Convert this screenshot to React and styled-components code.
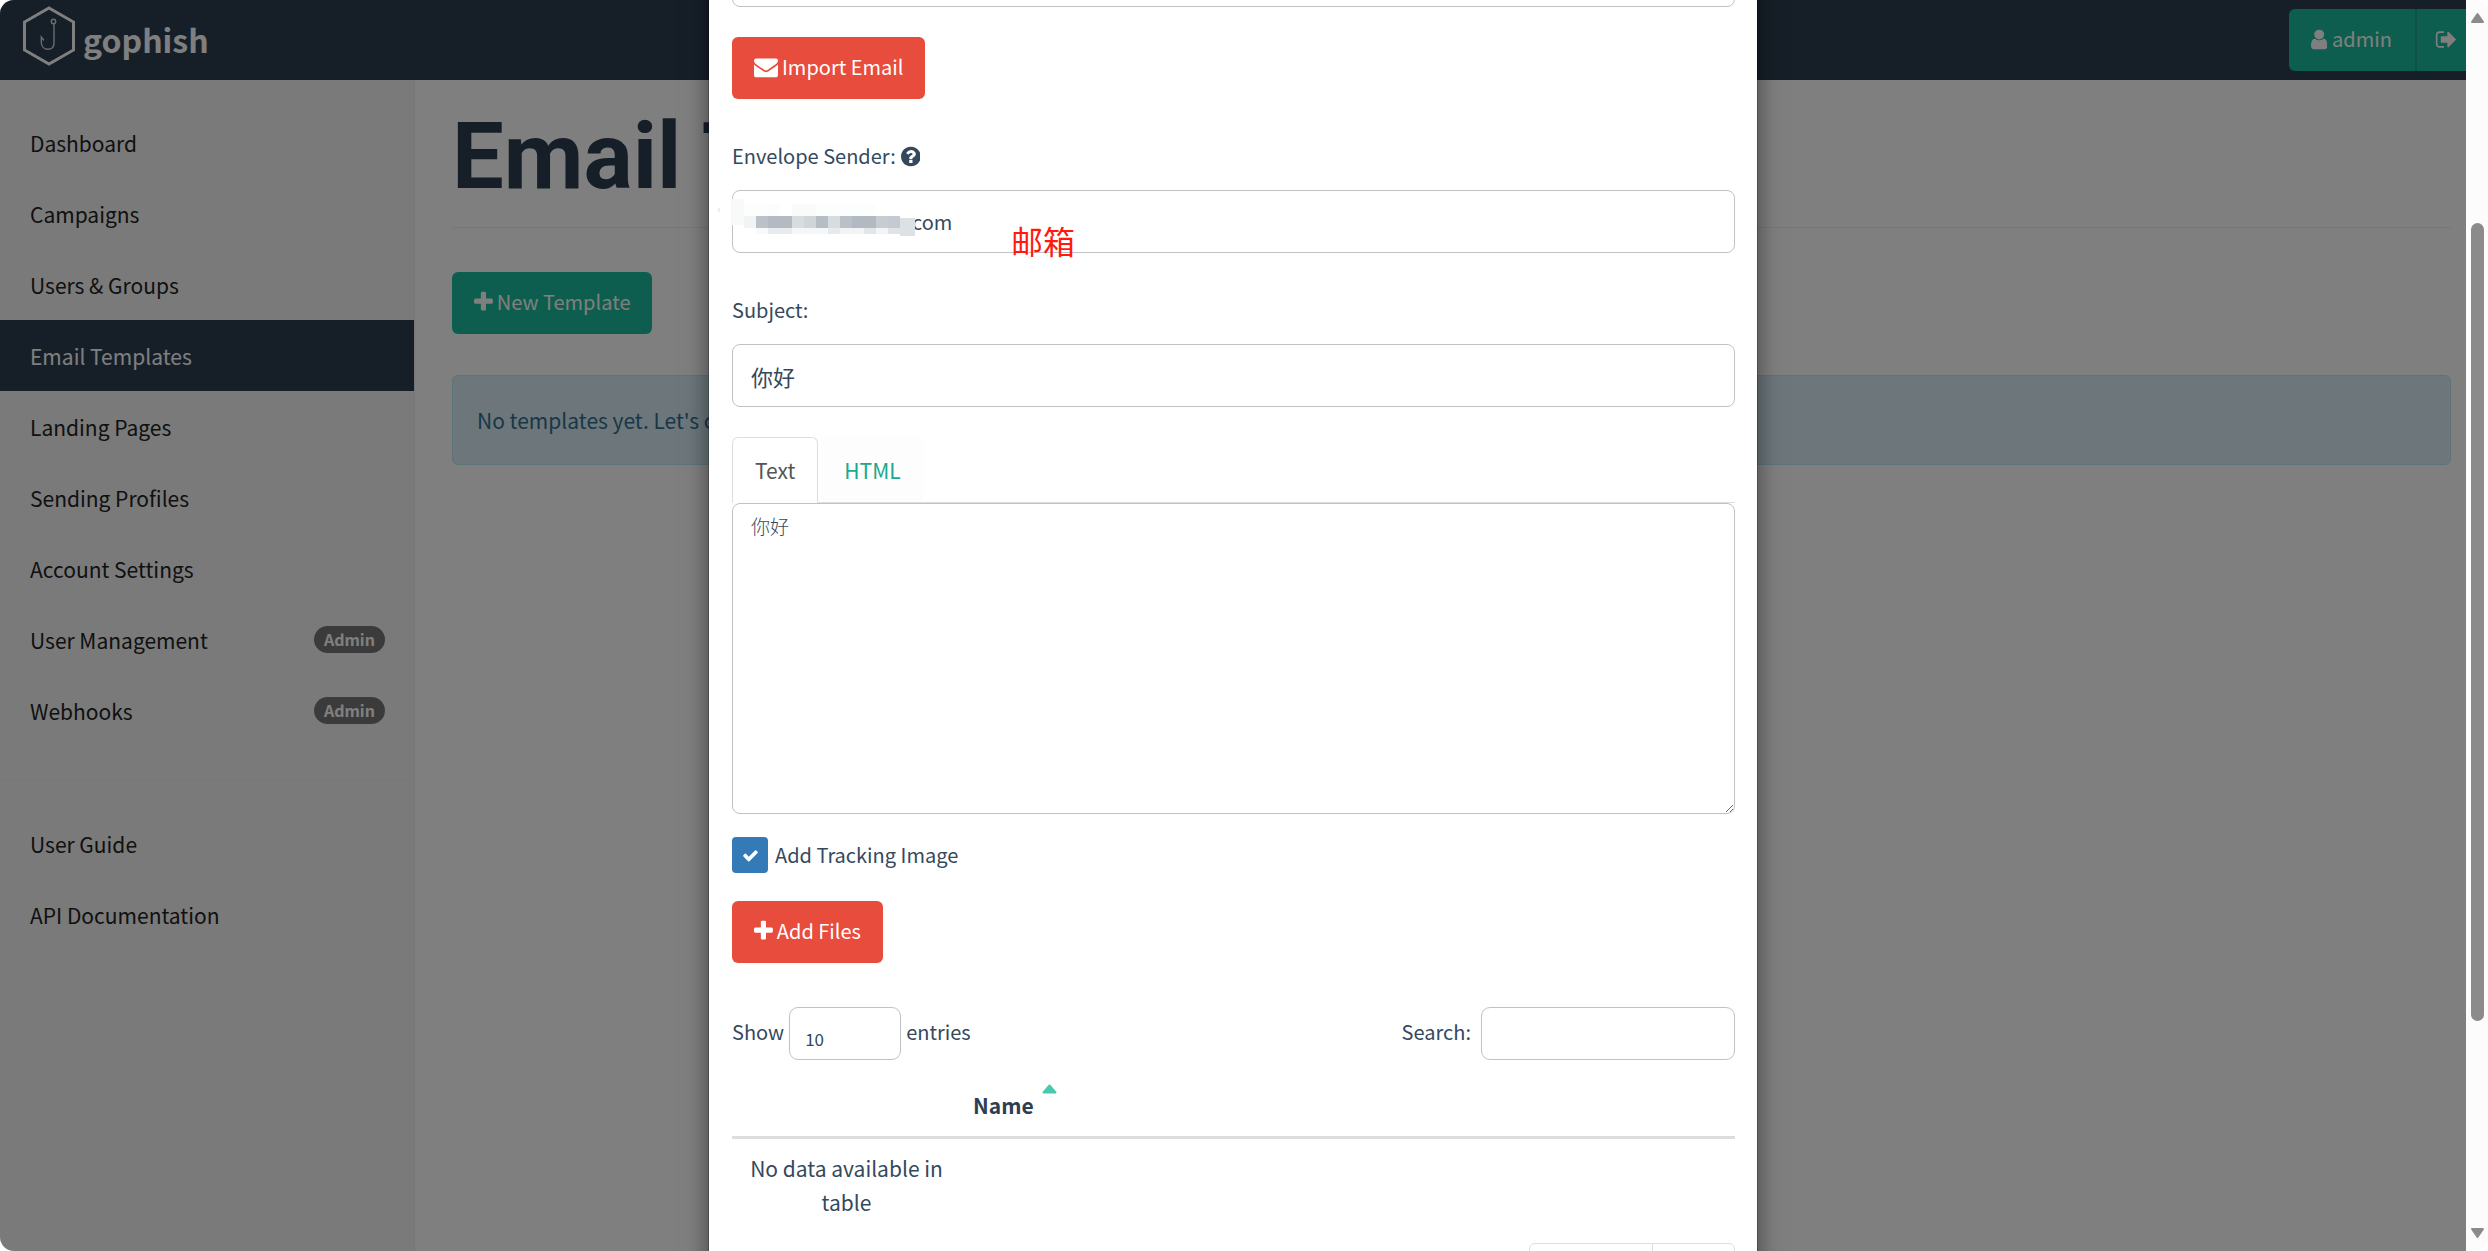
import styled, { createGlobalStyle } from "styled-components";

const ICONS = {
  plus: {
    box: "192 0 1408 1792",
    path: "M1600 736v192q0 40-28 68t-68 28h-416v416q0 40-28 68t-68 28h-192q-40 0-68-28t-28-68v-416h-416q-40 0-68-28t-28-68v-192q0-40 28-68t68-28h416v-416q0-40 28-68t68-28h192q40 0 68 28t28 68v416h416q40 0 68 28t28 68z",
  },
  user: {
    box: "256 0 1280 1792",
    path: "M1536 1399q0 109-62.5 187t-150.5 78h-854q-88 0-150.5-78t-62.5-187q0-85 8.5-160.5t31.5-152 58.5-131 94-89 134.5-34.5q131 128 313 128t313-128q76 0 134.5 34.5t94 89 58.5 131 31.5 152 8.5 160.5zm-256-887q0 159-112.5 271.5t-271.5 112.5-271.5-112.5-112.5-271.5 112.5-271.5 271.5-112.5 271.5 112.5 112.5 271.5z",
  },
  envelope: {
    box: "0 0 1792 1792",
    path: "M1792 710v794q0 66-47 113t-113 47h-1472q-66 0-113-47t-47-113v-794q44 49 101 87 362 246 497 345 57 42 92.5 65.5t94.5 48 110 24.5h2q51 0 110-24.5t94.5-48 92.5-65.5q170-123 498-345 57-39 100-87zm0-294q0 79-49 151t-122 123q-376 261-468 325-10 7-42.5 31t-54 38.5-52 32.5-57.5 27-50 9h-2q-23 0-50-9t-57.5-27-52-32.5-54-38.5-42.5-31q-91-64-262-182.5t-205-142.5q-62-42-117-115.5t-55-136.5q0-78 41.5-130t118.5-52h1472q65 0 112.5 47t47.5 113z",
  },
  question: {
    box: "128 0 1536 1792",
    path: "M1024 1376v-192q0-14-9-23t-23-9h-192q-14 0-23 9t-9 23v192q0 14 9 23t23 9h192q14 0 23-9t9-23zm256-672q0-88-55.5-163t-138.5-116-170-41q-243 0-371 213-15 24 8 42l132 100q7 6 19 6 16 0 25-12 53-68 86-92 34-24 86-24 48 0 85.5 26t37.5 59q0 38-20 61t-68 45q-63 28-115.5 86.5t-52.5 125.5v36q0 14 9 23t23 9h192q14 0 23-9t9-23q0-19 21.5-49.5t54.5-49.5q32-18 49-28.5t46-35 44.5-48 28-60.5 12.5-81zm384 192q0 209-103 385.5t-279.5 279.5-385.5 103-385.5-103-279.5-279.5-103-385.5 103-385.5 279.5-279.5 385.5-103 385.5 103 279.5 279.5 103 385.5z",
  },
  check: {
    box: "0 0 1792 1792",
    path: "M1671 566q0 40-28 68l-724 724-136 136q-28 28-68 28t-68-28l-136-136-362-362q-28-28-28-68t28-68l136-136q28-28 68-28t68 28l294 295 656-657q28-28 68-28t68 28l136 136q28 28 28 68z",
  },
  signOut: {
    box: "0 0 1792 1792",
    path: "M704 1440q0 4 1 20t.5 26.5-3 23.5-10 19.5-20.5 6.5h-320q-119 0-203.5-84.5t-84.5-203.5v-704q0-119 84.5-203.5t203.5-84.5h320q13 0 22.5 9.5t9.5 22.5q0 4 1 20t.5 26.5-3 23.5-10 19.5-20.5 6.5h-320q-66 0-113 47t-47 113v704q0 66 47 113t113 47h312l11.5 1 11.5 3 8 5.5 7 9 2 13.5zm928-544q0 26-19 45l-544 544q-19 19-45 19t-45-19-19-45v-288h-448q-26 0-45-19t-19-45v-384q0-26 19-45t45-19h448v-288q0-26 19-45t45-19 45 19l544 544q19 19 19 45z",
  },
};

const GlobalStyle = createGlobalStyle`
  *, *::before, *::after {
    box-sizing: border-box;
  }

  body {
    margin: 0;
    overflow: hidden;
    background: #ffffff;
    color: #34495e;
    font-family: "Noto Sans CJK SC", sans-serif;
    font-size: 21px;
    line-height: 32px;
  }

  button, input, select {
    font: inherit;
    color: inherit;
  }
`;

const Window = styled.div`
  display: flex;
  height: 100vh;
  border-radius: 14px;
  overflow: hidden;
`;

const Viewport = styled.div`
  position: relative;
  flex: 1;
  min-width: 0;
  overflow: hidden;
`;

const Navbar = styled.header`
  display: flex;
  align-items: center;
  justify-content: space-between;
  height: 80px;
  padding-left: 23px;
  background: #2c3e50;
`;

const Brand = styled.a`
  display: flex;
  align-items: center;
  gap: 7px;
  height: 72px;
  align-self: flex-start;
  color: #ffffff;
  text-decoration: none;
`;

const BrandName = styled.span`
  padding-top: 6px;
  font-size: 32px;
  font-weight: 700;
`;

const NavButtons = styled.div`
  display: flex;
`;

const NavButton = styled.button`
  display: flex;
  align-items: center;
  gap: 5px;
  height: 62px;
  padding: ${(p) => (p.$end ? "0 8px 2px 18px" : "0 23px 2px 22px")};
  border: 0;
  border-left: ${(p) => (p.$end ? "2px solid #18a689" : "0")};
  border-radius: ${(p) => (p.$end ? "0" : "6px 0 0 6px")};
  background: #1abc9c;
  color: #ffffff;
  font-size: 20px;
`;

const Columns = styled.div`
  display: flex;
  height: calc(100vh - 80px);
`;

const Sidebar = styled.nav`
  flex: 0 0 415px;
  padding-top: 27px;
  border-right: 1px solid #eeeeee;
  background: #f5f5f5;
`;

const NavList = styled.ul`
  margin: 0;
  padding: 0 0 33px;
  list-style: none;

  & + & {
    padding-top: 28px;
    border-top: 1px solid #eeeeee;
  }
`;

const NavLink = styled.a`
  display: flex;
  align-items: center;
  justify-content: space-between;
  height: 71px;
  padding: 0 29px 0 30px;
  background: ${(p) => (p.$active ? "#2c3e50" : "transparent")};
  color: ${(p) => (p.$active ? "#ffffff" : "#222222")};
  text-decoration: none;
`;

const Badge = styled.span`
  padding: 0 10px;
  border-radius: 14px;
  background: #777777;
  color: #ffffff;
  font-size: 16px;
  font-weight: 700;
  line-height: 27px;
`;

const Main = styled.main`
  flex: 1;
  min-width: 0;
  padding: 26px 15px 0 37px;
`;

const PageTitle = styled.h1`
  margin: 0 0 44px;
  padding-bottom: 20px;
  border-bottom: 1px solid #eeeeee;
  color: #2c3e50;
  font-family: Roboto, sans-serif;
  font-size: 92px;
  font-weight: 700;
  line-height: 101px;
`;

const Button = styled.button`
  display: flex;
  align-items: center;
  gap: 4px;
  width: fit-content;
  height: 62px;
  padding: 0 22px 2px;
  border: 0;
  border-radius: 6px;
  background: ${(p) => (p.$danger ? "#e74c3c" : "#1abc9c")};
  color: #ffffff;
  font-size: 20px;
`;

const Alert = styled.div`
  margin-top: 41px;
  padding: 28px 24px;
  border: 1px solid #bce8f1;
  border-radius: 6px;
  background: #d9edf7;
  color: #31708f;
`;

const Overlay = styled.div`
  position: absolute;
  inset: 0;
  overflow: hidden;
  background: rgba(0, 0, 0, 0.5);
`;

const Modal = styled.section`
  display: flex;
  flex-direction: column;
  width: 1048px;
  max-width: 100%;
  margin: -56px auto 0;
  padding: 0 22px 0 23px;
  background: #ffffff;
  box-shadow: 0 0 0 1px rgba(0, 0, 0, 0.2), 0 8px 23px rgba(0, 0, 0, 0.5);
`;

const TextInput = styled.input`
  width: 100%;
  height: 63px;
  padding: 0 18px;
  border: 1px solid #bdc3c7;
  border-radius: 8px;
  background: #ffffff;
  color: #34495e;
`;

const ImportRow = styled.div`
  margin: 30px 0 41px;
`;

const Field = styled.div`
  position: relative;
  display: flex;
  flex-direction: column;
  gap: 18px;
  margin-bottom: 41px;
`;

const FieldLabel = styled.label`
  display: flex;
  align-items: center;
  gap: 5px;
  font-size: 20px;
`;

const SenderInput = styled(TextInput)`
  padding-left: 179px;
  font-size: 20px;
`;

const SubjectInput = styled(TextInput)`
  font-size: 22px;
`;

const Redaction = styled.svg`
  position: absolute;
  left: -18px;
  top: 44px;
`;

const Annotation = styled.span`
  position: absolute;
  left: 279px;
  bottom: -6px;
  color: #ff1a0e;
  font-size: 32px;
  line-height: 38px;
`;

const Tabs = styled.div`
  display: flex;
  gap: 3px;
  margin-top: -11px;
  border-bottom: 1px solid #dddddd;
`;

const Tab = styled.button`
  height: 66px;
  margin-bottom: -1px;
  padding: 0 22px;
  border: 1px solid ${(p) => (p.$active ? "#dddddd" : "transparent")};
  border-bottom-color: ${(p) => (p.$active ? "#ffffff" : "#dddddd")};
  border-radius: 6px 6px 0 0;
  background: ${(p) => (p.$active ? "#ffffff" : "#fdfdfd")};
  color: ${(p) => (p.$active ? "#555555" : "#1aa98c")};
`;

const Body = styled.textarea`
  display: block;
  width: 100%;
  height: 311px;
  padding: 6px 18px;
  border: 1px solid #bdc3c7;
  border-radius: 8px;
  color: #34495e;
  font-family: "Noto Sans CJK SC", sans-serif;
  font-size: 19px;
  font-weight: 300;
  line-height: 32px;
  resize: vertical;
`;

const CheckLabel = styled.label`
  display: flex;
  align-items: center;
  gap: 7px;
  margin: 23px 0 28px;
  font-size: 20px;
`;

const CheckBox = styled.span`
  position: relative;
  display: grid;
  place-items: center;
  width: 36px;
  height: 36px;
  border-radius: 4px;
  background: #337ab7;
  color: #ffffff;
`;

const HiddenCheck = styled.input`
  position: absolute;
  inset: 0;
  margin: 0;
  opacity: 0;
`;

const TableTools = styled.div`
  display: flex;
  justify-content: space-between;
  margin-top: 44px;
`;

const ToolLabel = styled.label`
  display: flex;
  align-items: flex-start;
  gap: ${(p) => p.$gap};
  font-size: 20px;
  line-height: 49px;
`;

const LengthSelect = styled.select`
  width: 112px;
  height: 53px;
  padding: 11px 15px 0;
  border: 1px solid #bdc3c7;
  border-radius: 9px;
  background: #ffffff;
  color: #34495e;
  font-size: 17px;
  line-height: 32px;
  appearance: none;
`;

const SearchInput = styled(TextInput)`
  width: 254px;
  height: 53px;
  border-radius: 9px;
`;

const Table = styled.table`
  width: 100%;
  margin-top: 12px;
  border-collapse: collapse;
  table-layout: fixed;
`;

const HeadCell = styled.th`
  width: ${(p) => p.$width || "auto"};
  padding: 12px;
  border-bottom: 3px solid #dddddd;
  color: #2c3e50;
  font-weight: 700;
  line-height: 37px;
  text-align: left;
`;

const SortCaret = styled.svg`
  margin-left: 8px;
  vertical-align: 20px;
`;

const Cell = styled.td`
  padding: 12px;
  line-height: 34px;
  text-align: center;
`;

const Pager = styled.div`
  display: flex;
  align-self: flex-end;
  margin-top: 12px;
`;

const PagerButton = styled.button`
  width: ${(p) => (p.$next ? "83px" : "124px")};
  height: 51px;
  margin-left: ${(p) => (p.$next ? "-1px" : "0")};
  border: 1px solid #dddddd;
  border-radius: ${(p) => (p.$next ? "0 6px 6px 0" : "6px 0 0 6px")};
  background: #ffffff;
  color: #777777;
`;

const Scrollbar = styled.div`
  display: flex;
  flex-direction: column;
  align-items: center;
  flex: 0 0 22px;
  padding: 12px 0;
  background: #fcfcfc;
`;

const Thumb = styled.div`
  flex: 0 0 65%;
  width: 13px;
  margin: 199px 0 auto;
  border-radius: 7px;
  background: #8b8b8b;
`;

// every icon is drawn on a 1792-high grid, so the width follows its own box
const Icon = ({ name, size }) => (
  <svg height={size} viewBox={ICONS[name].box} fill="currentColor" aria-hidden="true">
    <path d={ICONS[name].path} />
  </svg>
);

const Logo = () => (
  <svg width="53" height="60" viewBox="0 0 53 60" fill="none" stroke="currentColor" aria-hidden="true">
    <path d="M26 2L50.500 16V44L26 58L1.500 44V16Z" strokeWidth="3" />
    <g strokeWidth="1.400" opacity="0.8">
      <circle cx="30.500" cy="15.500" r="2.200" />
      <path d="M31 18V37C31 41 28.500 43.300 25 43.300C21 43.300 18.300 40.500 18.300 36V31L21 34.500" />
    </g>
  </svg>
);

// x, y, width, height, fill of each mosaic block over the sender's address
const BLOCKS = [
  [17, 15, 13, 26, "#f8faf9"],
  [30, 20, 24, 12, "#fdfdfd"],
  [54, 20, 12, 12, "#fbfcfc"],
  [78, 20, 24, 12, "#f9fafa"],
  [102, 20, 60, 12, "#fcfdfd"],
  [30, 32, 12, 12, "#f1f3f4"],
  [42, 32, 12, 12, "#bac1c8"],
  [54, 32, 24, 12, "#b3bac1"],
  [78, 32, 12, 12, "#d8dcdf"],
  [90, 32, 12, 12, "#d0d5d8"],
  [102, 32, 12, 12, "#b5bdc5"],
  [114, 32, 12, 12, "#d8dcdf"],
  [126, 32, 12, 12, "#b9c0c7"],
  [138, 32, 24, 12, "#b2b9c0"],
  [162, 32, 12, 12, "#c8ccd1"],
  [174, 32, 12, 12, "#c4cad3"],
  [186, 34, 15, 18, "#dde1e4"],
  [42, 44, 12, 6, "#f8f9fa"],
  [54, 44, 24, 6, "#e9ecee"],
  [78, 44, 36, 6, "#f4f6f7"],
  [114, 44, 12, 6, "#e6eaec"],
  [126, 44, 24, 6, "#f1f3f4"],
  [150, 44, 12, 6, "#e2e6e9"],
  [162, 44, 12, 6, "#f3f4f5"],
  [174, 44, 12, 6, "#dfe3e6"],
];

const MENU = [
  { text: "Dashboard" },
  { text: "Campaigns" },
  { text: "Users & Groups" },
  { text: "Email Templates", active: true },
  { text: "Landing Pages" },
  { text: "Sending Profiles" },
  { text: "Account Settings" },
  { text: "User Management", admin: true },
  { text: "Webhooks", admin: true },
];

const HELP = [{ text: "User Guide" }, { text: "API Documentation" }];

const Menu = ({ items }) => (
  <NavList>
    {items.map((item) => (
      <li key={item.text}>
        <NavLink href="#" $active={item.active}>
          {item.text}
          {item.admin && <Badge>Admin</Badge>}
        </NavLink>
      </li>
    ))}
  </NavList>
);

const TemplateModal = () => (
  <Modal role="dialog" aria-label="New Template">
    <TextInput aria-label="Name" />
    <ImportRow>
      <Button $danger>
        <Icon name="envelope" size={24} />
        Import Email
      </Button>
    </ImportRow>

    <Field>
      <FieldLabel htmlFor="sender">
        Envelope Sender: <Icon name="question" size={23} />
      </FieldLabel>
      <SenderInput id="sender" defaultValue="com" />
      <Redaction width="201" height="60" aria-hidden="true">
        {BLOCKS.map(([x, y, width, height, fill]) => (
          <rect key={`${x}-${y}`} x={x} y={y} width={width} height={height} fill={fill} />
        ))}
        <path d="M3 26L6 23V29Z" fill="#eeeeee" />
      </Redaction>
      <Annotation>邮箱</Annotation>
    </Field>

    <Field>
      <FieldLabel htmlFor="subject">Subject:</FieldLabel>
      <SubjectInput id="subject" defaultValue="你好" />
    </Field>

    <Tabs role="tablist">
      <Tab role="tab" $active>
        Text
      </Tab>
      <Tab role="tab">HTML</Tab>
    </Tabs>
    <Body aria-label="Text" defaultValue="你好" />

    <CheckLabel>
      <CheckBox>
        <HiddenCheck type="checkbox" defaultChecked />
        <Icon name="check" size={17} />
      </CheckBox>
      Add Tracking Image
    </CheckLabel>

    <Button $danger>
      <Icon name="plus" size={24} />
      Add Files
    </Button>

    <TableTools>
      <ToolLabel $gap="5px">
        Show
        <LengthSelect defaultValue="10">
          <option>10</option>
          <option>25</option>
        </LengthSelect>
        entries
      </ToolLabel>
      <ToolLabel $gap="10px">
        Search:
        <SearchInput type="search" />
      </ToolLabel>
    </TableTools>

    <Table>
      <thead>
        <tr>
          <HeadCell $width="229px" />
          <HeadCell>
            Name
            <SortCaret width="15" height="10" viewBox="0 0 15 10" aria-hidden="true">
              <path d="M7.500 1.500L13.500 8.500H1.500Z" fill="#48c9b0" stroke="#48c9b0" strokeWidth="2" strokeLinejoin="round" />
            </SortCaret>
          </HeadCell>
        </tr>
      </thead>
      <tbody>
        <tr>
          <Cell>No data available in table</Cell>
        </tr>
      </tbody>
    </Table>

    <Pager>
      <PagerButton aria-label="Previous" />
      <PagerButton aria-label="Next" $next />
    </Pager>
  </Modal>
);

const App = () => (
  <>
    <GlobalStyle />
    <Window>
      <Viewport>
        <Navbar>
          <Brand href="#">
            <Logo />
            <BrandName>gophish</BrandName>
          </Brand>
          <NavButtons>
            <NavButton>
              <Icon name="user" size={23} />
              admin
            </NavButton>
            <NavButton $end aria-label="Sign out">
              <Icon name="signOut" size={23} />
            </NavButton>
          </NavButtons>
        </Navbar>
        <Columns>
          <Sidebar>
            <Menu items={MENU} />
            <Menu items={HELP} />
          </Sidebar>
          <Main>
            <PageTitle>Email Templates</PageTitle>
            <Button>
              <Icon name="plus" size={24} />
              New Template
            </Button>
            <Alert>No templates yet. Let's create one!</Alert>
          </Main>
        </Columns>
        <Overlay>
          <TemplateModal />
        </Overlay>
      </Viewport>
      <Scrollbar aria-hidden="true">
        <svg width="15" height="12" viewBox="0 0 15 12">
          <path d="M7.500 2L13 10H2Z" fill="#8b8b8b" stroke="#8b8b8b" strokeWidth="2" strokeLinejoin="round" />
        </svg>
        <Thumb />
        <svg width="15" height="12" viewBox="0 0 15 12">
          <path d="M7.500 10L13 2H2Z" fill="#8b8b8b" stroke="#8b8b8b" strokeWidth="2" strokeLinejoin="round" />
        </svg>
      </Scrollbar>
    </Window>
  </>
);

export default App;
